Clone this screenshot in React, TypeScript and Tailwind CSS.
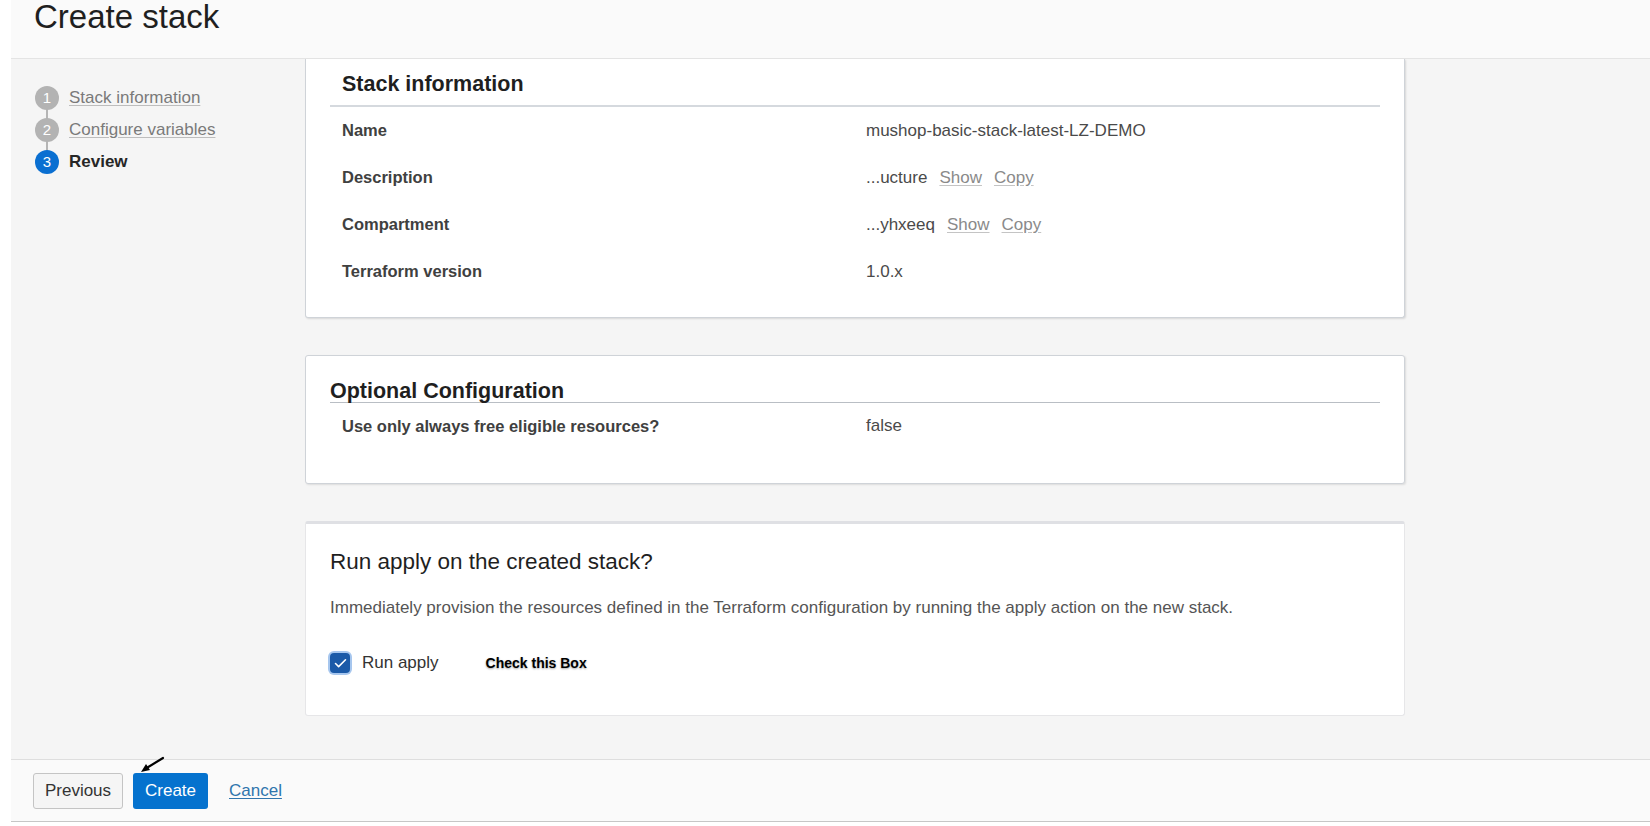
import { Check } from "lucide-react";

const steps = [
  { n: 1, label: "Stack information", done: true },
  { n: 2, label: "Configure variables", done: true },
  { n: 3, label: "Review", done: false },
];

const stackRows = [
  { label: "Name", value: "mushop-basic-stack-latest-LZ-DEMO" },
  { label: "Description", value: "...ucture", links: true },
  { label: "Compartment", value: "...yhxeeq", links: true },
  { label: "Terraform version", value: "1.0.x" },
];

function Row({ label, value, links }: { label: string; value: string; links?: boolean }) {
  return (
    <div className="flex h-[47px] items-center pl-[12px]">
      <div className="w-[524px] text-[16.5px] font-bold text-[#404040]">{label}</div>
      <div className="flex items-center text-[17px] text-[#4a4a4a]">
        <span>{value}</span>
        {links && (
          <>
            <a className="ml-3 text-[#8a8a8a] underline decoration-[#c4c4c4] underline-offset-2">Show</a>
            <a className="ml-3 text-[#8a8a8a] underline decoration-[#c4c4c4] underline-offset-2">Copy</a>
          </>
        )}
      </div>
    </div>
  );
}

export default function App() {
  return (
    <div className="relative flex h-[826px] w-[1650px] flex-col overflow-hidden bg-white pb-[4px] pl-[11px] font-['Liberation_Sans',Arial,sans-serif]">
      {/* Header */}
      <header className="h-[59px] flex-none border-b border-[#e4e4e4] bg-[#fafafa] pl-[23px]">
        <h1 className="text-[33px] leading-[33px] text-[#1f1f1f]">Create stack</h1>
      </header>

      {/* Body */}
      <div className="flex min-h-0 flex-1 bg-[#f5f5f5]">
        {/* Steps */}
        <nav className="w-[294px] flex-none pl-[24px] pt-[23px]">
          <div className="relative">
            <div className="absolute left-[11px] top-[16px] h-[64px] w-[2px] bg-[#b5b5b5]" />
            {steps.map((s) => (
              <div key={s.n} className="relative flex h-[32px] items-center gap-[10px]">
                <span
                  className={
                    s.done
                      ? "flex h-[24px] w-[24px] items-center justify-center rounded-full bg-[#b3b3b3] text-[15px] text-white"
                      : "flex h-[24px] w-[24px] items-center justify-center rounded-full bg-[#0a6fd1] text-[15px] text-white"
                  }
                >
                  {s.n}
                </span>
                {s.done ? (
                  <a className="text-[17px] text-[#7a7a7a] underline decoration-[#bdbdbd] underline-offset-2">{s.label}</a>
                ) : (
                  <span className="text-[17px] font-bold text-[#262626]">{s.label}</span>
                )}
              </div>
            ))}
          </div>
        </nav>

        {/* Content */}
        <main className="flex w-[1100px] flex-col">
          {/* Stack information */}
          <section className="rounded-b-[3px] border-x border-b border-[#cfd3d8] bg-white px-6 pb-[22px] pt-[13px] shadow-[1px_1px_2px_rgba(0,0,0,0.12)]">
            <h2 className="border-b-2 border-[#d5d9de] pb-[9px] pl-[12px] text-[21.5px] font-bold leading-[24px] text-[#1f1f1f]">
              Stack information
            </h2>
            {stackRows.map((r) => (
              <Row key={r.label} {...r} />
            ))}
          </section>

          {/* Optional configuration */}
          <section className="mt-[37px] h-[129px] rounded-[3px] border border-[#cfd3d8] bg-white px-6 pt-[24px] shadow-[1px_1px_2px_rgba(0,0,0,0.1)]">
            <h2 className="border-b border-[#b9bec4] text-[21.5px] font-bold leading-[22px] text-[#1f1f1f]">
              Optional Configuration
            </h2>
            <div className="mt-[13px] flex items-center pl-[12px] leading-[20px]">
              <div className="w-[524px] text-[16.5px] font-bold text-[#404040]">
                Use only always free eligible resources?
              </div>
              <div className="text-[17px] text-[#4a4a4a]">false</div>
            </div>
          </section>

          {/* Run apply */}
          <section className="mt-[37px] h-[195px] rounded-[3px] border border-t-[3px] border-[#e6e6e8] border-t-[#dfe0e4] bg-white px-6 pt-[25px]">
            <h2 className="text-[22.5px] leading-[26px] text-[#1f1f1f]">Run apply on the created stack?</h2>
            <p className="mt-[23px] text-[17px] leading-[20px] text-[#555555]">
              Immediately provision the resources defined in the Terraform configuration by running the apply action on the new stack.
            </p>
            <div className="mt-[33px] flex h-[24px] items-center">
              <span className="flex h-[20px] w-[20px] items-center justify-center rounded-[4px] bg-[#1b5aa8] ring-2 ring-[#a6c6ee]">
                <Check size={15} strokeWidth={2.5} className="text-white" />
              </span>
              <span className="ml-[12px] text-[17px] text-[#333333]">Run apply</span>
              <span className="ml-[47px] text-[14px] font-bold text-black [text-shadow:0_1px_2px_rgba(0,0,0,0.35)]">
                Check this Box
              </span>
            </div>
          </section>
        </main>
      </div>

      {/* Footer */}
      <footer className="flex h-[63px] flex-none items-center border-y border-t-[#dedede] border-b-[#c6c6c6] bg-[#fafafa] pl-[22px]">
        <button className="h-[36px] w-[90px] rounded-[3px] border border-[#c4c4c4] bg-[#f5f5f5] text-[17px] text-[#333333]">
          Previous
        </button>
        <button className="ml-[10px] h-[36px] w-[75px] rounded-[3px] bg-[#0572ce] text-[17px] text-white">
          Create
        </button>
        <a className="ml-[21px] text-[17px] text-[#2f75ad] underline underline-offset-2">Cancel</a>
      </footer>

      {/* Annotation arrow */}
      <svg className="absolute left-[137px] top-[753px]" width="30" height="22" viewBox="0 0 30 22">
        <line x1="26" y1="5" x2="8" y2="16" stroke="#000" strokeWidth="2.2" strokeLinecap="round" />
        <polygon points="4,19 9,11 13,17" fill="#000" />
      </svg>
    </div>
  );
}
